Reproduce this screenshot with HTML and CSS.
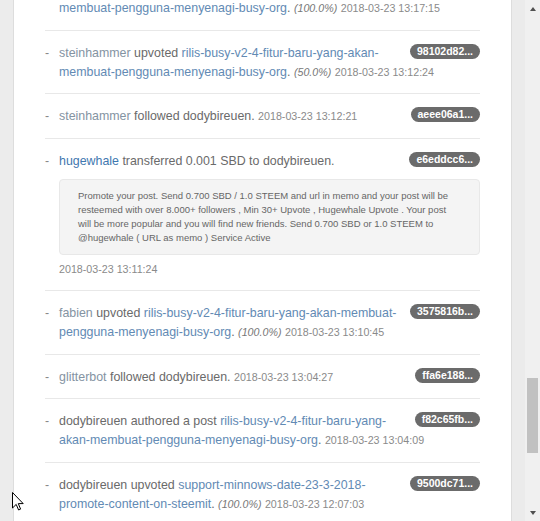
FILE: index.html
```html
<!DOCTYPE html>
<html>
<head>
<meta charset="utf-8">
<title>Activity</title>
<link rel="stylesheet" href="styles.css">
</head>
<body>
<div class="frame">
  <div class="gutter-left"></div>
  <main class="panel">
    <ul class="feed">
      <li class="item">
        <span class="dash">-</span>
        <div class="body">
          <span class="badge">1c9a0d4e...</span>
          <span class="actor">dodybireuen</span> upvoted <a class="post">rilis-busy-v2-4-fitur-baru-yang-akan-membuat-pengguna-menyenagi-busy-org</a>. <em class="pct">(100.0%)</em> <small class="time">2018-03-23 13:17:15</small>
        </div>
      </li>
      <li class="item">
        <span class="dash">-</span>
        <div class="body">
          <span class="badge">98102d82...</span>
          <a class="user">steinhammer</a> upvoted <a class="post">rilis-busy-v2-4-fitur-baru-yang-akan-membuat-pengguna-menyenagi-busy-org</a>. <em class="pct">(50.0%)</em> <small class="time">2018-03-23 13:12:24</small>
        </div>
      </li>
      <li class="item">
        <span class="dash">-</span>
        <div class="body">
          <span class="badge">aeee06a1...</span>
          <a class="user">steinhammer</a> followed dodybireuen. <small class="time">2018-03-23 13:12:21</small>
        </div>
      </li>
      <li class="item">
        <span class="dash">-</span>
        <div class="body">
          <span class="badge">e6eddcc6...</span>
          <a class="user user-strong">hugewhale</a> transferred 0.001 SBD to dodybireuen.
          <div class="memo">Promote your post. Send 0.700 SBD / 1.0 STEEM and url in memo and your post will be resteemed with over 8.000+ followers , Min 30+ Upvote , Hugewhale Upvote . Your post will be more popular and you will find new friends. Send 0.700 SBD or 1.0 STEEM to @hugewhale ( URL as memo ) Service Active</div>
          <div class="stamp"><small class="time">2018-03-23 13:11:24</small></div>
        </div>
      </li>
      <li class="item">
        <span class="dash">-</span>
        <div class="body">
          <span class="badge">3575816b...</span>
          <a class="user">fabien</a> upvoted <a class="post">rilis-busy-v2-4-fitur-baru-yang-akan-membuat-pengguna-menyenagi-busy-org</a>. <em class="pct">(100.0%)</em> <small class="time">2018-03-23 13:10:45</small>
        </div>
      </li>
      <li class="item">
        <span class="dash">-</span>
        <div class="body">
          <span class="badge">ffa6e188...</span>
          <a class="user">glitterbot</a> followed dodybireuen. <small class="time">2018-03-23 13:04:27</small>
        </div>
      </li>
      <li class="item">
        <span class="dash">-</span>
        <div class="body">
          <span class="badge">f82c65fb...</span>
          <span class="actor">dodybireuen</span> authored a post <a class="post">rilis-busy-v2-4-fitur-baru-yang-akan-membuat-pengguna-menyenagi-busy-org</a>. <small class="time">2018-03-23 13:04:09</small>
        </div>
      </li>
      <li class="item">
        <span class="dash">-</span>
        <div class="body">
          <span class="badge">9500dc71...</span>
          <span class="actor">dodybireuen</span> upvoted <a class="post">support-minnows-date-23-3-2018-promote-content-on-steemit</a>. <em class="pct">(100.0%)</em> <small class="time">2018-03-23 12:07:03</small>
        </div>
      </li>
    </ul>
  </main>
  <div class="gutter-right"></div>
  <div class="scrollbar">
    <div class="arrow arrow-up"></div>
    <div class="track"><div class="thumb"></div></div>
    <div class="arrow arrow-down"></div>
  </div>
</div>
<svg class="cursor" width="12" height="19" viewBox="0 0 12 19"><path d="M0.5 0.5 L0.5 16 L4.2 12.4 L6.6 18 L8.6 17.1 L6.3 11.6 L11.2 11.6 Z" fill="#fff" stroke="#000" stroke-width="1" stroke-linejoin="miter"/></svg>
</body>
</html>
```

FILE: styles.css
```css
html, body {
  margin: 0;
  padding: 0;
}
body {
  background: #ececec;
  font-family: "Liberation Sans", Arial, Helvetica, sans-serif;
  font-size: 12.4px;
  line-height: 19px;
  color: #6a6a6a;
  height: 521px;
  overflow: hidden;
  position: relative;
}
.frame {
  display: flex;
  height: 521px;
}
.gutter-left {
  width: 14px;
  box-sizing: border-box;
  background: #ececec;
  border-right: 1px solid #dddddd;
}
.panel {
  width: 498px;
  box-sizing: border-box;
  background: #fff;
  border-right: 1px solid #dddddd;
  padding: 0 31px;
  overflow: hidden;
}
.gutter-right {
  width: 13px;
  background: #ebebeb;
}
.scrollbar {
  width: 15px;
  background: #f0f0f0;
  display: flex;
  flex-direction: column;
}
.arrow {
  height: 17px;
  display: flex;
  justify-content: center;
  align-items: center;
}
.arrow::before {
  content: "";
  width: 0;
  height: 0;
  border-left: 3.5px solid transparent;
  border-right: 3.5px solid transparent;
}
.arrow-up::before {
  border-bottom: 4px solid #505050;
}
.arrow-down::before {
  border-top: 4px solid #505050;
}
.track {
  flex: 1;
  padding: 0 2px;
}
.thumb {
  margin-top: 361px;
  height: 75px;
  background: #c1c1c1;
}
.feed {
  list-style: none;
  margin: -33px 0 0;
  padding: 0;
}
.item {
  display: flex;
  padding: 13px 0 11.5px;
  border-bottom: 1px solid #e8e8e8;
}
.dash {
  width: 14px;
  flex: none;
  color: #888;
}
.body {
  flex: 1;
  min-width: 0;
}
.badge {
  float: right;
  margin-left: 4px;
  background: #6b6b6b;
  color: #fff;
  font-weight: bold;
  font-size: 10.5px;
  line-height: 11px;
  padding: 2px 7px;
  border-radius: 8px;
}
a {
  text-decoration: none;
}
.user {
  color: #8493a2;
}
.user-strong {
  color: #3f78b0;
}
.post {
  color: #628ab4;
}
.actor {
  color: #6a6a6a;
}
.pct {
  font-size: 10.7px;
  color: #777;
}
.time {
  font-size: 10.7px;
  color: #8a8a8a;
}
.memo {
  margin: 8px 0 5px;
  background: #f4f4f4;
  border: 1px solid #e8e8e8;
  border-radius: 4px;
  padding: 9px 18px 8px;
  font-size: 9.5px;
  line-height: 14.3px;
  color: #666;
}
.cursor {
  position: absolute;
  left: 12px;
  top: 492px;
}
```
